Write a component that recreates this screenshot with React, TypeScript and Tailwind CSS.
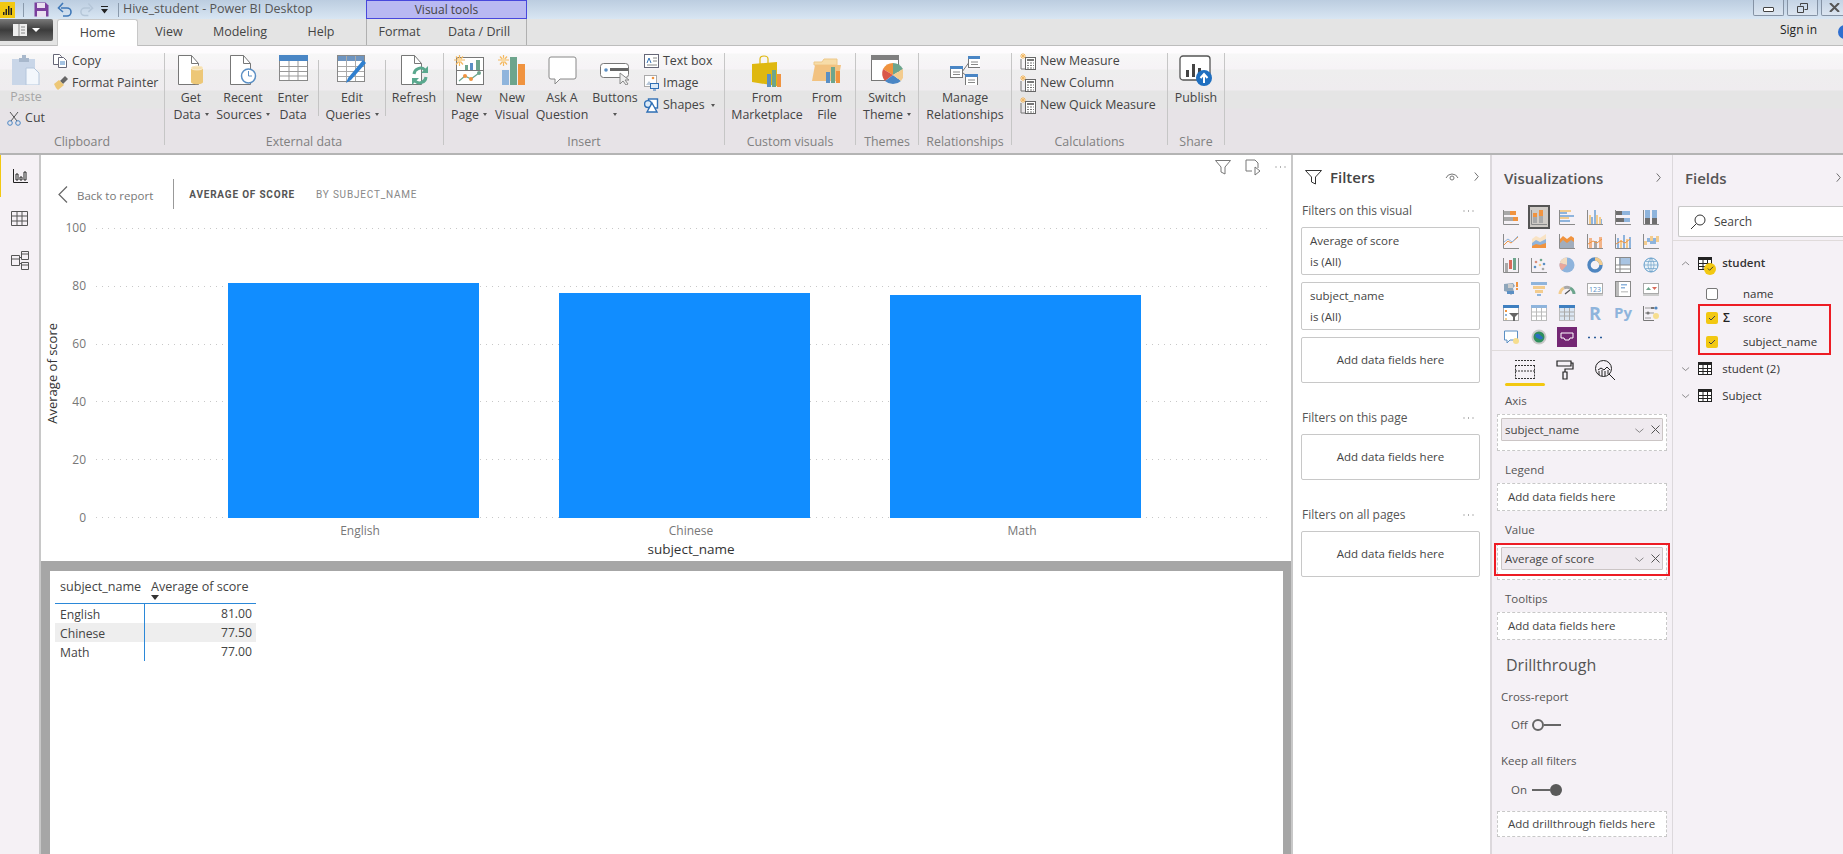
import type { ReactNode } from 'react';

const BLUE = '#8fb4dc';
const ORANGE = '#f0933f';
const TAN = '#f3cc8e';
const GRAY = '#a8a8a8';
const DARK = '#6e6e6e';
const TEAL = '#6da58d';

const R = (x: number, y: number, w: number, h: number, f: string) => (
  <rect x={x} y={y} width={w} height={h} fill={f} />
);

function Axis() {
  return <path d="M.5 1v14.5H16" stroke="#8a8a8a" fill="none" />;
}

// small 16px gallery icons, row by row
const vizIcons: ReactNode[] = [
  <><Axis />{R(1, 2, 6, 4, GRAY)}{R(7, 2, 6, 4, ORANGE)}{R(1, 8, 9, 4, GRAY)}{R(10, 8, 5, 4, ORANGE)}</>,
  <>{R(2, 8, 4, 6, GRAY)}{R(2, 4, 4, 4, ORANGE)}{R(8, 7, 4, 7, GRAY)}{R(8, 1, 4, 6, ORANGE)}<Axis /></>,
  <><Axis />{R(1, 1, 11, 2, TAN)}{R(1, 3, 7, 2, BLUE)}{R(1, 6, 14, 2, BLUE)}{R(1, 8, 9, 2, TAN)}{R(1, 11, 10, 2, BLUE)}</>,
  <><Axis />{R(2, 6, 2, 9, TAN)}{R(4, 8, 2, 7, BLUE)}{R(7, 1, 2, 14, BLUE)}{R(9, 6, 2, 9, TAN)}{R(12, 8, 2, 7, TAN)}{R(14, 10, 1, 5, BLUE)}</>,
  <><Axis />{R(1, 2, 6, 4, DARK)}{R(7, 2, 8, 4, BLUE)}{R(1, 9, 8, 4, DARK)}{R(9, 9, 6, 4, BLUE)}</>,
  <><Axis />{R(2, 9, 5, 6, DARK)}{R(2, 1, 5, 8, BLUE)}{R(9, 9, 5, 6, DARK)}{R(9, 1, 5, 8, BLUE)}</>,
  <><Axis /><path d="M1 12l4-4 3 2 7-6" stroke={ORANGE} fill="none" /><path d="M1 9l4-3 4 3 6-6" stroke={BLUE} fill="none" /></>,
  <><path d="M1 6l4-3 4 2 6-4v14H1z" fill="#f9e3c4" /><path d="M1 10l4-3 4 2 6-3v9H1z" fill={BLUE} /><path d="M1 13l4-2 4 1 6-2v5H1z" fill={ORANGE} /></>,
  <><path d="M1 6l3-3 4 3 4-3 3 2v10H1z" fill={ORANGE} /><path d="M1 10l3-3 4 3 4-3 3 2v6H1z" fill={BLUE} opacity=".8" /><Axis /></>,
  <><Axis />{R(2, 5, 3, 10, '#f2b48a')}{R(7, 8, 3, 7, GRAY)}{R(12, 4, 3, 11, '#f2b48a')}<path d="M1 11l5-3 4 2 5-4" stroke={ORANGE} fill="none" /></>,
  <><Axis />{R(2, 5, 2, 10, BLUE)}{R(5, 7, 2, 8, TAN)}{R(8, 2, 2, 13, BLUE)}{R(11, 6, 2, 9, TAN)}{R(14, 4, 2, 11, BLUE)}<path d="M1 11l5-3 4 2 5-4" stroke={ORANGE} fill="none" /></>,
  <><Axis />{R(1, 8, 3, 4, TAN)}{R(4, 5, 3, 4, BLUE)}{R(7, 3, 3, 5, TAN)}{R(7, 8, 3, 3, BLUE)}{R(10, 5, 3, 6, BLUE)}{R(13, 3, 3, 6, TAN)}</>,
  <><Axis />{R(2, 6, 3, 9, GRAY)}{R(6, 3, 3, 9, '#d96a5a')}{R(10, 1, 3, 12, TEAL)}<path d="M15.5 1v14" stroke="#8a8a8a" /></>,
  <><Axis /><circle cx="5" cy="5" r="1.3" fill="#d98f7a" /><circle cx="10" cy="3" r="1.3" fill={TEAL} /><circle cx="13" cy="7" r="1.3" fill="#5b8fc4" /><circle cx="4" cy="10" r="1.3" fill="#5b8fc4" /><circle cx="9" cy="8" r="1.3" fill={TAN} /><circle cx="12" cy="12" r="1.3" fill={GRAY} /></>,
  <><circle cx="8" cy="8" r="7.5" fill="#8fb4dc" /><path d="M8 8V.5A7.5 7.5 0 0 0 .8 6z" fill="#f2dcc0" /><path d="M8 8L.8 6A7.5 7.5 0 0 0 3 13.5z" fill="#eaa79a" /></>,
  <><circle cx="8" cy="8" r="6" fill="none" stroke="#4f86c0" strokeWidth="3.4" /><path d="M8 2a6 6 0 0 1 6 6" fill="none" stroke={TAN} strokeWidth="3.4" /></>,
  <><rect x=".5" y=".5" width="15" height="15" fill="#fff" stroke="#8a8a8a" />{R(4, 1, 11, 7, '#a9c4e2')}<path d="M1 8h14M5 1v14M1 12h14" stroke="#8a8a8a" /></>,
  <><circle cx="8" cy="8" r="7" fill="#eaf2f8" stroke="#5f9bc9" /><path d="M1 8h14M8 1v14M2.5 4.5h11M2.5 11.5h11M8 1c-4 4-4 10 0 14M8 1c4 4 4 10 0 14" stroke="#6da0c8" fill="none" strokeWidth=".7" /></>,
  <><path d="M1 3l9-1 2 3-2 2 1 4-3 3-3-3-4-1z" fill="#8fa6bb" /><path d="M5 3h5v4H5z" fill="#ccc" />{R(13, 1, 2, 5, ORANGE)}{R(13, 7, 2, 2, ORANGE)}<path d="M4 10h7v3H4z" fill="#5b8fc4" /></>,
  <>{R(0, 1, 16, 3, BLUE)}{R(2, 5, 12, 3, TAN)}{R(4, 9, 8, 3, TAN)}{R(6, 13, 4, 2, BLUE)}</>,
  <><path d="M1 13a7 7 0 0 1 4-6" stroke={TAN} strokeWidth="3" fill="none" /><path d="M5 7a7 7 0 0 1 6 0" stroke={GRAY} strokeWidth="3" fill="none" /><path d="M11 7a7 7 0 0 1 4 6" stroke={TEAL} strokeWidth="3" fill="none" /><path d="M6 13l5-4" stroke="#555" strokeWidth="1.2" /></>,
  <><rect x=".5" y="2.5" width="15" height="10" fill="#fff" stroke="#aaa" />{R(0, 13, 16, 2, '#ccc')}<text x="8" y="10.5" fontSize="7" textAnchor="middle" fill="#5b8fc4">123</text></>,
  <><rect x=".5" y=".5" width="15" height="15" fill="#fff" stroke="#8a8a8a" />{R(1, 1, 3, 14, '#bbb')}{R(6, 3, 6, 1.5, BLUE)}{R(6, 6, 4, 1.5, BLUE)}{R(6, 10, 7, 1.5, '#ccc')}</>,
  <><rect x=".5" y="2.5" width="15" height="10" fill="#fff" stroke="#aaa" />{R(0, 13, 16, 2, '#ccc')}<path d="M3 9l2.5-3L8 9z" fill={TEAL} /><path d="M9 6h5l-2.5 3z" fill="#d96a5a" /></>,
  <><rect x=".5" y=".5" width="15" height="15" fill="#fff" stroke="#aaa" />{R(0, 0, 16, 3, '#3f7fc0')}{R(2, 5, 2, 2, ORANGE)}{R(2, 9, 2, 2, BLUE)}{R(2, 13, 2, 2, TAN)}<path d="M6 8h10l-4 4v4h-2v-4z" fill="#666" /></>,
  <><rect x=".5" y=".5" width="15" height="15" fill="#fff" stroke="#bbb" />{R(0, 0, 16, 3, BLUE)}<path d="M1 7h14M1 11h14M5.5 3v12M10.5 3v12" stroke="#bbb" /></>,
  <><rect x=".5" y=".5" width="15" height="15" fill="#dbe6f2" stroke="#bbb" />{R(0, 0, 16, 3, '#3f7fc0')}<path d="M1 7h14M1 11h14M5.5 3v12M10.5 3v12" stroke="#aaa" /></>,
  <text x="8" y="15" fontSize="18" fontWeight="700" textAnchor="middle" fill="#8fb4dc" fontFamily="'Open Sans',sans-serif">R</text>,
  <text x="8" y="13" fontSize="15" fontWeight="700" textAnchor="middle" fill="#8fb4dc" fontFamily="'Open Sans',sans-serif">Py</text>,
  <><path d="M.5 1v14.5H11" stroke="#777" fill="none" /><path d="M2 3h12M2 8h9M2 13h6" stroke="#999" />{R(8, 2, 3, 2, '#777')}<circle cx="13" cy="3" r="1.6" fill="#4f86c0" /><circle cx="5" cy="8" r="1.6" fill="#777" /><circle cx="13" cy="11" r="3" fill="#f6dd8e" /></>,
  <><path d="M1.5 2h13v9H7l-3 3v-3H1.5z" fill="#fff" stroke="#5b8fc4" /><circle cx="13" cy="12" r="3" fill="#f6dd8e" /></>,
  <><circle cx="8" cy="8" r="7.5" fill="#c9c9c9" /><circle cx="8" cy="8" r="5.5" fill="#2f8f5c" /><path d="M4 6c2-2 4-1 5 0s3 2 3 3-3 2-4 1-3 0-4-4z" fill="#2b6fc0" /></>,
];

function Chevron({ dir, size = 8, color = '#555' }: { dir: 'left' | 'right' | 'up' | 'down'; size?: number; color?: string }) {
  const d = { left: 'M9 1L3 8l6 7', right: 'M3 1l6 7-6 7', up: 'M1 10l7-6 7 6', down: 'M1 5l7 6 7-6' }[dir];
  const vert = dir === 'left' || dir === 'right';
  return (
    <svg width={vert ? size : size * 1.6} height={vert ? size * 1.6 : size} viewBox={vert ? '0 0 12 16' : '0 0 16 14'} className="shrink-0">
      <path d={d} fill="none" stroke={color} strokeWidth="1.3" />
    </svg>
  );
}

function Doc({ children }: { children?: ReactNode }) {
  return (
    <svg width="30" height="30" viewBox="0 0 30 30">
      <path d="M2.5 .5h13l7 8v21h-20z" fill="#fff" stroke="#777" />
      <path d="M15.5 .5v8h7" fill="none" stroke="#777" />
      {children}
    </svg>
  );
}

function Sun({ x, y }: { x: number; y: number }) {
  return (
    <g transform={`translate(${x} ${y})`} stroke="#f4b860" strokeWidth="1.2">
      <path d="M0 5h11M5.5 0v11M2 1.5l7 8M9 1.5l-7 8" />
      <circle cx="5.5" cy="5" r="2.2" fill="#f9d9a0" stroke="none" />
    </g>
  );
}

const Ribbon = {
  paste: (
    <svg width="28" height="30" viewBox="0 0 28 30">
      <rect x="0" y="4" width="23" height="26" fill="#c9d6e8" />
      <path d="M7 3h3V0h4v3h3v4H7z" fill="#a8b8cc" />
      <path d="M14 13h8l5 5v12H14z" fill="#f3f7fc" stroke="#b4c6dc" />
    </svg>
  ),
  getData: (
    <Doc>
      <path d="M15 13c0-3 12-3 12 0v14c0 3-12 3-12 0z" fill="#edc777" />
      <ellipse cx="21" cy="13" rx="6" ry="2" fill="#f5dfae" stroke="#fff" strokeWidth=".5" />
    </Doc>
  ),
  recent: (
    <Doc>
      <circle cx="20.5" cy="21" r="7" fill="#fff" stroke="#5b8fc4" strokeWidth="1.5" />
      <path d="M20.5 16v5h3.5" fill="none" stroke="#5b8fc4" />
    </Doc>
  ),
  enter: (
    <svg width="29" height="30" viewBox="0 0 29 30">
      <rect x=".5" y=".5" width="28" height="25" fill="#fff" stroke="#888" />
      <rect width="29" height="6" fill="#4a86c5" />
      <path d="M1 11.5h27M1 16.5h27M1 21h27M10 6v19M19 6v19" stroke="#999" />
    </svg>
  ),
  edit: (
    <svg width="30" height="30" viewBox="0 0 30 30">
      <rect x=".5" y=".5" width="27" height="26" fill="#fff" stroke="#888" />
      <rect x="1" y="1" width="26" height="5" fill="#6d94c0" />
      <path d="M1 11.5h26M1 16.5h26M1 21.5h26M9.500 1v25M18.500 1v25" stroke="#aaa" />
      <path d="M26 5l3 3-15 17-5 3 2-5z" fill="#2f7fcf" />
    </svg>
  ),
  refresh: (
    <Doc>
      <path d="M15 19a6.500 6.500 0 0 1 11-4" fill="none" stroke="#5aa88e" strokeWidth="3" />
      <path d="M29 11v7h-7z" fill="#5aa88e" />
      <path d="M27 22a6.500 6.500 0 0 1-11 4" fill="none" stroke="#5aa88e" strokeWidth="3" />
      <path d="M13 30v-7h7z" fill="#5aa88e" />
    </Doc>
  ),
  newPage: (
    <svg width="30" height="30" viewBox="0 0 30 30">
      <rect x="2.500" y="2.500" width="27" height="27" fill="#fff" stroke="#777" />
      <path d="M3 15.500h26" stroke="#777" />
      {R(11, 10, 3, 5, TEAL)}
      {R(16, 8, 3, 7, '#5b8fc4')}
      {R(22, 5, 4, 10, TEAL)}
      <path d="M5 26l6-5 6 3 8-6" fill="none" stroke={TEAL} strokeWidth="1.2" />
      <circle cx="11" cy="21" r="2" fill={ORANGE} />
      <circle cx="17" cy="24" r="2" fill={ORANGE} />
      <circle cx="25" cy="18" r="2" fill={TEAL} />
      <Sun x={0} y={0} />
    </svg>
  ),
  newVisual: (
    <svg width="28" height="30" viewBox="0 0 28 30">
      {R(4, 15, 7, 15, '#8fb4dc')}
      {R(12, 2, 7, 28, TEAL)}
      {R(20, 9, 7, 21, ORANGE)}
      <Sun x={0} y={0} />
    </svg>
  ),
  ask: (
    <svg width="29" height="30" viewBox="0 0 29 30">
      <path d="M3 2h23q2 0 2 2v18q0 2-2 2H12l-5 5v-5H3q-2 0-2-2V4q0-2 2-2z" fill="#fff" stroke="#888" />
    </svg>
  ),
  button: (
    <svg width="30" height="30" viewBox="0 0 30 30">
      <rect x=".5" y="8.500" width="28" height="14" rx="3" fill="#fff" stroke="#777" />
      <circle cx="6" cy="15" r="1.800" fill="#5b8fc4" />
      {R(10, 13, 18, 3, '#666')}
      <path d="M20 18l0 11 3-3 3 4 2-1-3-4h4z" fill="#eee" stroke="#888" />
    </svg>
  ),
  market: (
    <svg width="30" height="34" viewBox="0 0 30 34">
      <path d="M8 9V4q0-3 4-3t4 3v5" fill="none" stroke="#dfb810" strokeWidth="1.2" />
      <path d="M0 9l25-2v24L0 27z" fill="#dfb810" />
      {R(15, 19, 4, 13, '#5b8fc4')}
      {R(20, 15, 4, 17, TEAL)}
      {R(25, 19, 4, 13, ORANGE)}
    </svg>
  ),
  fromFile: (
    <svg width="30" height="30" viewBox="0 0 30 30">
      <path d="M2 7h8l2-3h13v6H2z" fill="#f7dca8" stroke="#eec98a" />
      <path d="M0 26l3-16h26l-3 16z" fill="#f2c280" />
      {R(14, 17, 4, 11, '#5b8fc4')}
      {R(19, 12, 4, 16, TEAL)}
      {R(24, 16, 4, 12, ORANGE)}
    </svg>
  ),
  theme: (
    <svg width="32" height="31" viewBox="0 0 32 31">
      <rect x=".5" y=".5" width="27" height="25" fill="#fff" stroke="#777" />
      <rect width="28" height="5" fill="#7f7f7f" />
      <path d="M22 20V8a12 12 0 0 1 10 6z" fill={TEAL} />
      <path d="M22 20V8a12 12 0 0 0-10 6z" fill={ORANGE} />
      <path d="M22 20l-10-6a12 12 0 0 0 2 12z" fill="#d9574a" />
      <path d="M22 20l-8 6a12 12 0 0 0 16 0z" fill="#4a86c5" />
      <path d="M22 20l10-6a12 12 0 0 1-2 12z" fill={TAN} />
    </svg>
  ),
  manage: (
    <svg width="30" height="30" viewBox="0 0 30 30">
      <path d="M12 17L20 6M12 17l8 7" fill="none" stroke="#777" />
      {[[18, 1], [0, 11], [15, 19]].map(([x, y]) => (
        <g key={x}>
          <rect x={x + 0.5} y={y + 0.5} width="12" height="11" fill="#fff" stroke="#777" />
          <rect x={x} y={y} width="13" height="3" fill="#4a86c5" />
          <path d={`M${x + 3} ${y + 6}h7M${x + 3} ${y + 8.5}h7`} stroke="#888" />
        </g>
      ))}
    </svg>
  ),
  publish: (
    <svg width="34" height="32" viewBox="0 0 34 32">
      <rect x="1" y="1" width="30" height="24" rx="3" fill="#fff" stroke="#555" strokeWidth="1.3" />
      {R(7, 15, 3, 7, '#444')}
      {R(13, 9, 3, 13, '#444')}
      {R(19, 13, 3, 9, '#444')}
      <circle cx="25" cy="23" r="8" fill="#1f6fc0" />
      <path d="M25 28v-8M21.500 23l3.500-4 3.500 4" fill="none" stroke="#fff" strokeWidth="2" />
    </svg>
  ),
};

function RibbonButton({ w, icon, lines, arrow }: { w: number; icon: ReactNode; lines: string[]; arrow?: boolean }) {
  return (
    <div className="flex shrink-0 flex-col items-center" style={{ width: w }}>
      <div className="flex h-[36px] items-start justify-center pt-[2px]">{icon}</div>
      {lines.map((l, i) => (
        <div key={l} className="flex items-center whitespace-nowrap leading-[17px] text-[#444]">
          {l}
          {arrow && i === lines.length - 1 && <span className="ml-[4px] h-0 w-0 border-x-[2.5px] border-t-[3px] border-x-transparent border-t-[#555]" />}
        </div>
      ))}
    </div>
  );
}

function InnerSep() {
  return <div className="mx-[1px] mt-[7px] h-[56px] w-[1px] shrink-0 bg-[#c4c4c4]" />;
}

function Group({ width, label, children }: { width: number; label: string; children: ReactNode }) {
  return (
    <div className="flex h-[92px] shrink-0 flex-col border-r border-[#c6c6c6]" style={{ width }}>
      <div className="flex flex-1">{children}</div>
      <div className="-mb-[5px] text-center leading-[16px] text-[#808080]">{label}</div>
    </div>
  );
}

function SmallRow({ icon, text, arrow }: { icon: ReactNode; text: string; arrow?: boolean }) {
  return (
    <div className="flex h-[22px] items-center gap-[4px] whitespace-nowrap text-[#444]">
      <span className="flex w-[16px] justify-center">{icon}</span>
      {text}
      {arrow && <span className="ml-[2px] h-0 w-0 border-x-[2.5px] border-t-[3px] border-x-transparent border-t-[#555]" />}
    </div>
  );
}

function CalcIcon() {
  return (
    <svg width="16" height="17" viewBox="0 0 16 17">
      <path d="M1 6v10h5" fill="none" stroke="#777" />
      <rect x="5.500" y="4.500" width="10" height="12" fill="#fff" stroke="#666" />
      {R(7, 6, 7, 2, '#777')}
      <path d="M7 10h7M7 12.500h7M7 15h7" stroke="#777" strokeDasharray="2 1" />
      <path d="M0 3h6M3 0v6M1 1l4 4M5 1L1 5" stroke="#f4b860" />
    </svg>
  );
}

function TableIcon() {
  return (
    <svg width="14" height="13" viewBox="0 0 14 13" className="shrink-0">
      <rect x=".5" y=".5" width="13" height="12" fill="#fff" stroke="#222" />
      <rect width="14" height="3" fill="#222" />
      <path d="M5 3v10M9.500 3v10M0 6.500h14M0 9.500h14" stroke="#222" />
    </svg>
  );
}

function Check({ on }: { on?: boolean }) {
  return (
    <span className={`flex h-[12px] w-[12px] shrink-0 items-center justify-center rounded-[2px] ${on ? 'bg-[#f2c811]' : 'border border-[#777] bg-white'}`}>
      {on && (
        <svg width="8" height="8" viewBox="0 0 8 8">
          <path d="M1 4l2 2 4-4" fill="none" stroke="#444" strokeWidth="1" />
        </svg>
      )}
    </span>
  );
}

function Dots() {
  return (
    <svg width="11" height="3" viewBox="0 0 11 3">
      <path d="M.5 1h1M5 1h1M9.500 1h1" stroke="#666" strokeWidth="1.200" />
    </svg>
  );
}

function FilterCard({ lines, h }: { lines?: string[]; h: number }) {
  return (
    <div className="rounded-[2px] border border-[#c8c8c8] bg-white text-[#444]" style={{ height: h }}>
      {lines ? (
        <div className="pl-[8px] pt-[2px] leading-[21px]">
          {lines.map((l) => (
            <div key={l}>{l}</div>
          ))}
        </div>
      ) : (
        <div className="flex h-full items-center justify-center">Add data fields here</div>
      )}
    </div>
  );
}

function FilterHead({ text }: { text: string }) {
  return (
    <div className="flex h-[16px] items-center justify-between pr-[6px] text-[12px] text-[#555]">
      <span className="pl-[1px]">{text}</span>
      <Dots />
    </div>
  );
}

function Well({ label, h, mt, pill, addText = 'Add data fields here', outlined }: { label?: string; h: number; mt: number; pill?: string; addText?: string; outlined?: boolean }) {
  return (
    <div style={{ marginTop: mt }}>
      {label && <div className="mb-[5px] h-[16px] pl-[13px] leading-[16px] text-[#555]">{label}</div>}
      <div className={`relative ml-[5px] w-[170px] border border-dashed border-[#c8c8c8] bg-white ${pill ? 'px-[3px] pt-[3px]' : 'flex items-center pl-[10px]'}`} style={{ height: h }}>
        {pill ? (
          <div className="flex h-[23px] items-center justify-between rounded-[1px] border border-[#cbc5c5] bg-[#efeaef] pl-[3px] pr-[2px] text-[#444]">
            <span>{pill}</span>
            <span className="flex items-center gap-[5px]">
              <Chevron dir="down" size={8} color="#666" />
              <svg width="9" height="9" viewBox="0 0 9 9">
                <path d="M.5.500l8 8M8.500.500l-8 8" stroke="#555" />
              </svg>
            </span>
          </div>
        ) : (
          <span className="text-[#444]">{addText}</span>
        )}
        {outlined && <div className="pointer-events-none absolute -inset-x-[4px] -top-[1px] h-[33px] border-2 border-[#ed1c24]" />}
      </div>
    </div>
  );
}

const bars = [
  { name: 'English', value: 81 },
  { name: 'Chinese', value: 77.5 },
  { name: 'Math', value: 77 },
];

export default function App() {
  return (
    <div className="flex h-[854px] w-[1843px] flex-col overflow-hidden bg-white font-['Open_Sans',sans-serif] text-[11.5px]">
      {/* title bar */}
      <div className="flex h-[19px] shrink-0 bg-gradient-to-b from-[#bccde0] to-[#d8e6f3]">
        <div className="flex w-[366px] items-center">
          <svg width="15" height="16" viewBox="0 0 15 16" className="shrink-0">
            <rect width="15" height="16" fill="#f2c811" />
            <path d="M3 10h1.500v3H3zM5.500 7H7v6H5.500zM8 4h1.500v9H8zM10.500 6H12v7h-1.500z" fill="#222" />
          </svg>
          <div className="ml-[8px] h-[14px] w-[1px] bg-[#8a9aac]" />
          <svg width="15" height="15" viewBox="0 0 15 15" className="ml-[10px]">
            <path d="M.5.500h11l3 3v11H.5z" fill="#7a3f9d" />
            <rect x="3" y="1" width="8" height="5" fill="#e9dff0" />
            <rect x="3" y="9" width="9" height="6" fill="#e9dff0" />
          </svg>
          <svg width="16" height="15" viewBox="0 0 16 15" className="ml-[8px]">
            <path d="M4 6h6a4 4 0 0 1 0 8H6" fill="none" stroke="#3f78b8" strokeWidth="1.600" />
            <path d="M6 1L1.500 6 6 10" fill="none" stroke="#3f78b8" strokeWidth="1.600" />
          </svg>
          <svg width="15" height="15" viewBox="0 0 16 15" className="ml-[6px]">
            <path d="M12 6H6a4 4 0 0 0 0 8h4" fill="none" stroke="#b5c6d8" strokeWidth="1.600" />
            <path d="M10 1l4.500 5L10 10" fill="none" stroke="#b5c6d8" strokeWidth="1.600" />
          </svg>
          <svg width="7" height="8" viewBox="0 0 7 8" className="ml-[7px]">
            <path d="M0 0h7v1H0zM0 3h7L3.500 7.500z" fill="#222" />
          </svg>
          <div className="ml-[10px] h-[14px] w-[1px] bg-[#8a9aac]" />
          <span className="ml-[4px] whitespace-nowrap text-[12.5px] text-[#555]">Hive_student - Power BI Desktop</span>
        </div>
        <div className="flex h-[19px] w-[161px] items-center justify-center border border-[#4848dc] bg-[#b9b9f2] text-[12px] text-[#444]">Visual tools</div>
        <div className="flex-1" />
        <div className="-mr-[9px] flex h-[16px] gap-[3px]">
          {['min', 'max', 'close'].map((k) => (
            <div key={k} className="flex h-[16px] w-[31px] items-center justify-center rounded-b-[2px] border border-t-0 border-[#8593a5] bg-gradient-to-b from-[#c5d4e5] to-[#dbe5f0]">
              {k === 'min' && <span className="mt-[4px] h-[5px] w-[11px] rounded-[1px] border border-[#444] bg-white" />}
              {k === 'max' && (
                <svg width="11" height="10" viewBox="0 0 11 10">
                  <path d="M3.500 2.500v-2h7v6h-3M.5 3.500h6v6h-6z" fill="none" stroke="#444" />
                </svg>
              )}
              {k === 'close' && (
                <svg width="11" height="9" viewBox="0 0 11 9" className="mr-[4px]">
                  <path d="M1 0l9 9M10 0L1 9" stroke="#555" strokeWidth="2" />
                </svg>
              )}
            </div>
          ))}
        </div>
      </div>

      {/* tab row */}
      <div className="flex h-[27px] shrink-0 border-b border-[#bdbdbd] bg-[#e4e4e4] text-[12.5px] text-[#444]">
        <div className="flex h-[22px] w-[53px] items-center justify-center gap-[5px] self-start rounded-r-[2px] bg-gradient-to-b from-[#7a7a7a] via-[#3c3c3c] to-[#666]">
          <svg width="14" height="12" viewBox="0 0 14 12">
            <rect width="14" height="12" fill="#eee" />
            <path d="M6 0v12M8 3h4M8 6h4M8 9h4" stroke="#888" />
          </svg>
          <span className="h-0 w-0 border-x-[4px] border-t-[4px] border-x-transparent border-t-white" />
        </div>
        <div className="ml-[4px] flex h-[27px] w-[81px] items-center justify-center rounded-t-[3px] border border-b-0 border-[#c8c8c8] bg-white">Home</div>
        <div className="flex w-[62px] items-center justify-center">View</div>
        <div className="flex w-[80px] items-center justify-center">Modeling</div>
        <div className="flex w-[82px] items-center justify-center">Help</div>
        <div className="w-[4px]" />
        <div className="flex w-[66px] items-center justify-center border-l border-[#b0b0b0]">Format</div>
        <div className="flex w-[95px] items-center justify-center border-r border-[#b0b0b0]">Data / Drill</div>
        <div className="flex-1" />
        <span className="mr-[21px] self-center pb-[4px] text-[12px] text-[#222]">Sign in</span>
        <span className="mr-[-9px] h-[14px] w-[14px] self-center rounded-full bg-[#2f6fd0]" />
      </div>

      {/* ribbon */}
      <div className="flex h-[109px] shrink-0 border-b-2 border-[#b4b4b4] bg-[linear-gradient(to_bottom,#fefcfe_0,#fefcfe_7px,#f7f7f7_8px,#f6f3f6_23px,#eeeeee_24px,#efecef_44px,#e5e5e5_45px,#e5e5e5_62px,#e7e3e7_63px)] pt-[7px] text-[12.4px]">
        <Group width={165} label="Clipboard">
          <div className="flex w-[52px] flex-col items-center pt-[2px]">
            <div className="h-[30px]">{Ribbon.paste}</div>
            <div className="mt-[3px] leading-[17px] text-[#a5a5a5]">Paste</div>
            <div className="mt-[4px] flex items-center gap-[4px] text-[#444]">
              <svg width="14" height="15" viewBox="0 0 14 15">
                <path d="M3 1l7 9M11 1L4 10" stroke="#555" fill="none" />
                <circle cx="3" cy="12" r="2.300" fill="none" stroke="#4a86c5" />
                <circle cx="11" cy="12" r="2.300" fill="none" stroke="#4a86c5" />
              </svg>
              Cut
            </div>
          </div>
          <div className="-mt-[3px] flex flex-col">
            <SmallRow
              text="Copy"
              icon={
                <svg width="14" height="14" viewBox="0 0 14 14">
                  <path d="M.5.500h6l2 2v8h-8z" fill="#fff" stroke="#667" />
                  <path d="M5.500 3.500h5l3 3v7h-8z" fill="#fff" stroke="#667" />
                  <path d="M7 8h5M7 10h5" stroke="#4a86c5" />
                </svg>
              }
            />
            <SmallRow
              text="Format Painter"
              icon={
                <svg width="15" height="14" viewBox="0 0 15 14">
                  <path d="M7 5l5-5 3 3-5 5z" fill="#666" />
                  <path d="M1 8l5-4 5 5-6 5-2-2z" fill="#edc777" />
                </svg>
              }
            />
          </div>
        </Group>

        <Group width={279} label="External data">
          <RibbonButton w={52} icon={Ribbon.getData} lines={['Get', 'Data']} arrow />
          <RibbonButton w={52} icon={Ribbon.recent} lines={['Recent', 'Sources']} arrow />
          <RibbonButton w={48} icon={Ribbon.enter} lines={['Enter', 'Data']} />
          <InnerSep />
          <RibbonButton w={64} icon={Ribbon.edit} lines={['Edit', 'Queries']} arrow />
          <InnerSep />
          <RibbonButton w={54} icon={Ribbon.refresh} lines={['Refresh']} />
        </Group>

        <Group width={281} label="Insert">
          <RibbonButton w={50} icon={Ribbon.newPage} lines={['New', 'Page']} arrow />
          <RibbonButton w={36} icon={Ribbon.newVisual} lines={['New', 'Visual']} />
          <RibbonButton w={64} icon={Ribbon.ask} lines={['Ask A', 'Question']} />
          <div className="w-[42px] shrink-0">
            <RibbonButton w={42} icon={Ribbon.button} lines={['Buttons']} />
            <div className="mt-[7px] flex justify-center">
              <span className="h-0 w-0 border-x-[2.5px] border-t-[3px] border-x-transparent border-t-[#555]" />
            </div>
          </div>
          <div className="-mt-[3px] ml-[7px] flex flex-col">
            <SmallRow
              text="Text box"
              icon={
                <svg width="15" height="14" viewBox="0 0 15 14">
                  <rect x=".5" y=".5" width="14" height="13" fill="#fff" stroke="#667" />
                  <path d="M3 9l2-5 2 5" fill="none" stroke="#2f6fb5" />
                  <path d="M9 4h4M9 7h4M3 11h10" stroke="#888" />
                </svg>
              }
            />
            <SmallRow
              text="Image"
              icon={
                <svg width="15" height="16" viewBox="0 0 15 16">
                  <rect x=".5" y=".5" width="12" height="11" fill="#fff" stroke="#aaa" />
                  <path d="M2 10l3-4 3 4z" fill="#b8c8da" />
                  <circle cx="9" cy="3" r="1.300" fill={ORANGE} />
                  <rect x="6.500" y="8.500" width="8" height="5" fill="#dcebf8" stroke="#2f6fb5" />
                  <path d="M9 15h3" stroke="#2f6fb5" />
                </svg>
              }
            />
            <SmallRow
              text="Shapes"
              arrow
              icon={
                <svg width="15" height="15" viewBox="0 0 15 15">
                  <rect x="4.500" y="1" width="9" height="9" fill="#fff" stroke="#2f6fb5" strokeWidth="1.400" />
                  <circle cx="4" cy="6" r="3.400" fill="#dcebf8" stroke="#2f6fb5" strokeWidth="1.400" />
                  <path d="M8 5l5 9H3z" fill="#fff" stroke="#2f6fb5" strokeWidth="1.400" />
                </svg>
              }
            />
          </div>
        </Group>

        <Group width={131} label="Custom visuals">
          <RibbonButton w={84} icon={Ribbon.market} lines={['From', 'Marketplace']} />
          <RibbonButton w={36} icon={Ribbon.fromFile} lines={['From', 'File']} />
        </Group>
        <Group width={63} label="Themes">
          <RibbonButton w={62} icon={Ribbon.theme} lines={['Switch', 'Theme']} arrow />
        </Group>
        <Group width={93} label="Relationships">
          <RibbonButton w={92} icon={Ribbon.manage} lines={['Manage', 'Relationships']} />
        </Group>
        <Group width={156} label="Calculations">
          <div className="-mt-[3px] ml-[8px] flex flex-col">
            <SmallRow icon={<CalcIcon />} text="New Measure" />
            <SmallRow icon={<CalcIcon />} text="New Column" />
            <SmallRow icon={<CalcIcon />} text="New Quick Measure" />
          </div>
        </Group>
        <Group width={57} label="Share">
          <RibbonButton w={56} icon={Ribbon.publish} lines={['Publish']} />
        </Group>
      </div>

      {/* main */}
      <div className="flex min-h-0 flex-1">
        {/* rail */}
        <div className="flex w-[41px] shrink-0 flex-col border-r-2 border-[#c8c8c8] bg-[#f5f1f5]">
          <div className="flex h-[42px] items-center justify-center border-l border-[#f2c811]">
            <svg width="15" height="14" viewBox="0 0 15 14">
              <path d="M.5 0v13.500H15" fill="none" stroke="#222" />
              <path d="M3 5h2v6H3zM7 8h2v3H7zM11 3h2v8h-2z" fill="#fff" stroke="#222" />
            </svg>
          </div>
          <div className="flex h-[42px] items-center justify-center">
            <svg width="17" height="15" viewBox="0 0 17 15">
              <path d="M.5.500h16v14H.5zM.5 5h16M.5 10h16M6 .5v14M11 .5v14" fill="none" stroke="#555" />
            </svg>
          </div>
          <div className="flex h-[42px] items-center justify-center">
            <svg width="18" height="19" viewBox="0 0 18 19">
              <path d="M.5 4.500h8v10h-8zM.5 8h8M10.500.500h7v8h-7zM10.500 3h7M10.500 11.500h7v7h-7zM10.500 14h7M8.500 6.500h2M8.500 12.500h2" fill="none" stroke="#555" />
            </svg>
          </div>
        </div>

        {/* canvas */}
        <div className="flex w-[1250px] shrink-0 flex-col bg-[#a6a6a6]">
          <div className="relative flex h-[406px] shrink-0 flex-col bg-white">
            <div className="flex h-[73px] shrink-0 items-start pl-[17px] pt-[24px]">
              <div className="flex h-[30px] items-center">
                <svg width="10" height="17" viewBox="0 0 10 17" className="shrink-0">
                  <path d="M9 .5L1 8.500l8 8" fill="none" stroke="#666" strokeWidth="1.200" />
                </svg>
                <span className="ml-[9px] pt-[4px] text-[11.5px] text-[#777]">Back to report</span>
                <div className="ml-[20px] h-[30px] w-[1px] bg-[#999]" />
                <span className="ml-[15px] pt-[1px] font-['Roboto',sans-serif] text-[10px] font-bold tracking-[0.8px] text-[#555]">AVERAGE OF SCORE</span>
                <span className="ml-[21px] pt-[1px] font-['Roboto',sans-serif] text-[10px] tracking-[0.8px] text-[#888]">BY SUBJECT_NAME</span>
              </div>
            </div>
            <div className="absolute right-[5px] top-[4px] flex items-center gap-[14px]">
              <svg width="16" height="15" viewBox="0 0 16 15">
                <path d="M.5.500h15L10 7v7l-4-2V7z" fill="none" stroke="#777" />
              </svg>
              <svg width="16" height="17" viewBox="0 0 16 17">
                <path d="M1 4V1h9l3 3v5M1 4v8h6M10 16l5-4-5-4z" fill="none" stroke="#777" />
              </svg>
              <Dots />
            </div>
            <div className="flex h-[290px] shrink-0">
              <div className="flex w-[23px] shrink-0 items-center justify-center">
                <div className="rotate-180 whitespace-nowrap text-[13px] font-medium text-[#333] [writing-mode:vertical-rl]">Average of score</div>
              </div>
              <div className="flex w-[22px] shrink-0 flex-col justify-between text-right text-[12px] text-[#777]">
                {[100, 80, 60, 40, 20, 0].map((t) => (
                  <div key={t} className="flex h-0 items-center justify-end">
                    {t}
                  </div>
                ))}
              </div>
              <div className="relative ml-[10px] w-[1176px] shrink-0">
                <div className="absolute inset-0 flex flex-col justify-between">
                  {[100, 80, 60, 40, 20, 0].map((t) => (
                    <div key={t} className="h-[1px] bg-[repeating-linear-gradient(to_right,#c8c8c8_0,#c8c8c8_1px,transparent_1px,transparent_6px)]" />
                  ))}
                </div>
                <div className="relative flex h-full items-end justify-center gap-[80px]">
                  {bars.map((b) => (
                    <div key={b.name} className="w-[251px] bg-[#118dff]" style={{ height: b.value * 2.9 }} />
                  ))}
                </div>
              </div>
            </div>
            <div className="ml-[62px] mt-[4px] flex w-[1176px] justify-center gap-[80px] text-[12px] text-[#777]">
              {bars.map((b) => (
                <div key={b.name} className="w-[251px] text-center leading-[17px]">
                  {b.name}
                </div>
              ))}
            </div>
            <div className="ml-[62px] mt-[1px] w-[1176px] text-center text-[13.5px] font-medium leading-[18px] text-[#333]">subject_name</div>
          </div>
          <div className="ml-[9px] mr-[8px] mt-[10px] min-h-0 flex-1 bg-white pl-[5px] pt-[6px]">
            <div className="w-[201px] text-[12.2px] text-[#444]">
              <div className="flex h-[27px] border-b border-[#2b88d8] text-[12.6px]">
                <div className="w-[90px] pl-[5px] pt-[1px]">subject_name</div>
                <div className="relative flex-1 whitespace-nowrap pl-[6px] pt-[1px]">
                  Average of score
                  <span className="absolute bottom-[3px] left-[6px] h-0 w-0 border-x-[4.5px] border-t-[5px] border-x-transparent border-t-[#333]" />
                </div>
              </div>
              {[
                ['English', '81.00'],
                ['Chinese', '77.50'],
                ['Math', '77.00'],
              ].map(([n, v], i) => (
                <div key={n} className={`flex h-[19px] items-center ${i === 1 ? 'bg-[#eeeeee]' : ''}`}>
                  <div className="h-full w-[90px] border-r border-[#2b88d8] pl-[5px] pt-[1px] leading-[19px]">{n}</div>
                  <div className="flex-1 pr-[4px] pt-[2px] text-right">{v}</div>
                </div>
              ))}
            </div>
          </div>
        </div>

        {/* filters */}
        <div className="flex w-[201px] shrink-0 flex-col border-x-2 border-[#c8c8c8] border-r-[#dcd8dc] bg-white pl-[8px] pr-[10px]">
          <div className="flex h-[48px] shrink-0 items-start pt-[12px] text-[#333]">
            <svg width="17" height="15" viewBox="0 0 17 15" className="ml-[4px] mt-[3px]">
              <path d="M.5.500h16L10.500 7v7l-4-2V7z" fill="none" stroke="#333" />
            </svg>
            <span className="ml-[8px] text-[15px] font-semibold leading-[20px] text-[#444]">Filters</span>
            <svg width="14" height="10" viewBox="0 0 14 10" className="ml-auto mr-[14px] mt-[4px]">
              <path d="M1 7a6.500 6.500 0 0 1 12 0" fill="none" stroke="#777" />
              <circle cx="7" cy="7" r="2" fill="none" stroke="#777" />
            </svg>
            <span className="mt-[4px]">
              <Chevron dir="right" size={7} color="#444" />
            </span>
          </div>
          <FilterHead text="Filters on this visual" />
          <div className="mt-[8px] flex flex-col gap-[7px]">
            <FilterCard h={48} lines={['Average of score', 'is (All)']} />
            <FilterCard h={48} lines={['subject_name', 'is (All)']} />
            <FilterCard h={46} />
          </div>
          <div className="mt-[27px]">
            <FilterHead text="Filters on this page" />
          </div>
          <div className="mt-[8px]">
            <FilterCard h={46} />
          </div>
          <div className="mt-[27px]">
            <FilterHead text="Filters on all pages" />
          </div>
          <div className="mt-[8px]">
            <FilterCard h={46} />
          </div>
        </div>

        {/* visualizations */}
        <div className="flex w-[181px] shrink-0 flex-col border-r border-[#dcd8dc] bg-[#f5f1f6]">
          <div className="flex h-[49px] shrink-0 items-start justify-between pl-[12px] pr-[10px] pt-[13px]">
            <span className="text-[15px] font-semibold leading-[20px] text-[#555]">Visualizations</span>
            <span className="pt-[4px]">
              <Chevron dir="right" size={7} color="#444" />
            </span>
          </div>
          <div className="ml-[5px] grid shrink-0 grid-cols-[repeat(6,28px)] grid-rows-[repeat(6,24px)] pt-[1px]">
            {vizIcons.map((icon, i) => (
              <div key={i} className={`flex items-center justify-center ${i === 1 ? 'relative' : ''}`}>
                {i === 1 && <div className="absolute inset-x-[3px] inset-y-0 border-2 border-[#555] bg-[#cfcbc6]" />}
                <svg width="16" height="16" viewBox="0 0 16 16" className="relative overflow-visible">
                  {icon}
                </svg>
              </div>
            ))}
            <div className="mx-[4px] my-[2px] flex items-center justify-center bg-[#742774]">
              <svg width="14" height="10" viewBox="0 0 14 10">
                <path d="M1 1h12v5h-3l-1 2H5L4 6H1z" fill="none" stroke="#fff" />
              </svg>
            </div>
            <div className="flex items-center justify-center">
              <svg width="14" height="3" viewBox="0 0 14 3">
                <path d="M0 1.500h2M6 1.500h2M12 1.500h2" stroke="#2b5c99" strokeWidth="1.600" />
              </svg>
            </div>
          </div>
          <div className="mt-[1px] h-[1px] shrink-0 bg-[#e0dbdb]" />
          <div className="flex h-[36px] shrink-0 items-start pl-[13px] pt-[9px]">
            <div className="flex w-[40px] flex-col items-center">
              <svg width="20" height="19" viewBox="0 0 20 19">
                <path d="M0 .5h20M0 5.500h20M0 11h20M0 18.500h20M.5 5.500v13M19.500 5.500v13" stroke="#333" fill="none" strokeDasharray="2 1" />
              </svg>
              <div className="mt-[4px] h-[3px] w-[40px] rounded-full bg-[#f2c811]" />
            </div>
            <svg width="18" height="20" viewBox="0 0 18 20" className="ml-[11px]">
              <path d="M1 1h14v5H1zM15 3h2v6H9v3M7 12h4v7H7z" fill="none" stroke="#222" strokeWidth="1.200" />
            </svg>
            <svg width="20" height="20" viewBox="0 0 20 20" className="ml-[21px]">
              <circle cx="8.500" cy="8.500" r="8" fill="none" stroke="#222" />
              <path d="M3 10l3-2 3 2 3-3 3 3M4 11v4M7 10v6M10 11v5M13 10v4M14 14l6 6" fill="none" stroke="#222" />
            </svg>
          </div>
          <Well label="Axis" mt={6} h={37} pill="subject_name" />
          <Well label="Legend" mt={11} h={28} />
          <Well label="Value" mt={11} h={37} pill="Average of score" outlined />
          <Well label="Tooltips" mt={11} h={28} />
          <div className="ml-[14px] mt-[15px] text-[16px] font-medium leading-[20px] text-[#555]">Drillthrough</div>
          <div className="ml-[9px] mt-[14px] leading-[16px] text-[#555]">Cross-report</div>
          <div className="ml-[19px] mt-[13px] flex h-[14px] items-center text-[#555]">
            Off
            <span className="ml-[4px] h-[12px] w-[12px] rounded-full border-2 border-[#666]" />
            <span className="h-[2px] w-[17px] bg-[#666]" />
          </div>
          <div className="ml-[9px] mt-[21px] leading-[16px] text-[#555]">Keep all filters</div>
          <div className="ml-[19px] mt-[14px] flex h-[14px] items-center text-[#555]">
            On
            <span className="ml-[5px] h-[2px] w-[18px] bg-[#666]" />
            <span className="h-[12px] w-[12px] rounded-full bg-[#5a5a5a]" />
          </div>
          <Well mt={14} h={26} addText="Add drillthrough fields here" />
        </div>

        {/* fields */}
        <div className="flex min-w-0 flex-1 flex-col bg-[#f5f1f6] text-[#333]">
          <div className="flex h-[51px] shrink-0 items-start justify-between pl-[12px] pr-[1px] pt-[13px]">
            <span className="text-[15px] font-semibold leading-[20px] text-[#555]">Fields</span>
            <span className="pt-[4px]">
              <Chevron dir="right" size={7} color="#444" />
            </span>
          </div>
          <div className="ml-[5px] flex h-[31px] shrink-0 items-center rounded-l-[2px] border border-r-0 border-[#c8c8c8] bg-white pl-[11px] text-[#444]">
            <svg width="16" height="16" viewBox="0 0 16 16">
              <circle cx="10" cy="6" r="5" fill="none" stroke="#333" />
              <path d="M6.500 9.500L1 15" stroke="#333" />
            </svg>
            <span className="ml-[8px] text-[12px]">Search</span>
          </div>
          <div className="mt-[3px] h-[1px] shrink-0 bg-[#e0dbdb]" />
          <div className="flex h-[41px] shrink-0 items-center pl-[7px] pt-[3px]">
            <Chevron dir="up" size={7} color="#555" />
            <span className="relative ml-[7px]">
              <TableIcon />
              <span className="absolute -bottom-[5px] -right-[4px] flex h-[12px] w-[12px] items-center justify-center rounded-full bg-[#f2c811]">
                <svg width="7" height="7" viewBox="0 0 8 8">
                  <path d="M1 4l2 2 4-4" fill="none" stroke="#333" />
                </svg>
              </span>
            </span>
            <span className="ml-[10px] font-semibold text-[#333]">student</span>
          </div>
          <div className="relative flex shrink-0 flex-col">
            <div className="flex h-[24px] items-center pl-[33px]">
              <Check />
              <span className="ml-[25px]">name</span>
            </div>
            <div className="flex h-[24px] items-center pl-[33px]">
              <Check on />
              <span className="ml-[5px] w-[20px] text-[12px] font-semibold text-[#222]">Σ</span>
              <span>score</span>
            </div>
            <div className="flex h-[24px] items-center pl-[33px]">
              <Check on />
              <span className="ml-[25px]">subject_name</span>
            </div>
            <div className="pointer-events-none absolute left-[25px] top-[22px] h-[51px] w-[133px] border-2 border-[#ed1c24]" />
          </div>
          <div className="mt-[1px] flex h-[27px] shrink-0 items-center pl-[7px]">
            <Chevron dir="down" size={7} color="#555" />
            <span className="ml-[7px]">
              <TableIcon />
            </span>
            <span className="ml-[10px]">student (2)</span>
          </div>
          <div className="flex h-[27px] shrink-0 items-center pl-[7px]">
            <Chevron dir="down" size={7} color="#555" />
            <span className="ml-[7px]">
              <TableIcon />
            </span>
            <span className="ml-[10px]">Subject</span>
          </div>
        </div>
      </div>
    </div>
  );
}
